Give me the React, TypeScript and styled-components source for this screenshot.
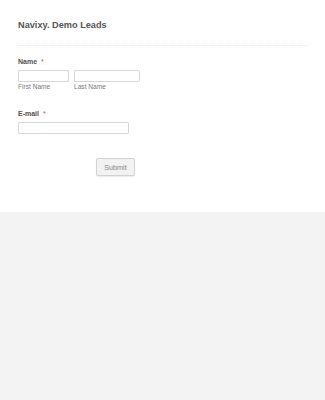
import styled, { createGlobalStyle } from 'styled-components';

const GlobalStyle = createGlobalStyle`
  html, body {
    margin: 0;
    padding: 0;
    background: #f3f3f3;
    font-family: "Liberation Sans", Arial, sans-serif;
  }
`;

const Page = styled.div`
  min-height: 400px;
  background: #f3f3f3;
`;

const FormCard = styled.form`
  background: #ffffff;
  padding: 20px 17px 36px 18px;
  display: flex;
  flex-direction: column;
`;

const Title = styled.h1`
  margin: 0;
  font-size: 9.2px;
  line-height: 11px;
  font-weight: 700;
  color: #555555;
`;

const Divider = styled.hr`
  margin: 14px 0 11px;
  border: 0;
  border-top: 1px dotted #e8e8e8;
  height: 0;
`;

const Field = styled.div<{ $gapTop?: number }>`
  display: flex;
  flex-direction: column;
  margin-top: ${(p) => p.$gapTop ?? 0}px;
`;

const Label = styled.label`
  font-size: 7px;
  line-height: 9px;
  font-weight: 700;
  color: #505050;
  margin-bottom: 4px;
`;

const Required = styled.span`
  color: #f23a3c;
  margin-left: 4px;
  font-weight: 400;
`;

const Row = styled.div`
  display: flex;
  gap: 5px;
`;

const SubField = styled.div`
  display: flex;
  flex-direction: column;
`;

const Input = styled.input<{ $w: number }>`
  box-sizing: border-box;
  width: ${(p) => p.$w}px;
  height: 12px;
  margin: 0;
  padding: 0 3px;
  border: 1px solid #d6d6d6;
  border-radius: 1px;
  background: #fff;
  font-size: 7px;
`;

const SubLabel = styled.span`
  font-size: 6.6px;
  line-height: 8px;
  color: #7a7a7a;
  margin-top: 1px;
`;

const ButtonRow = styled.div`
  display: flex;
  padding-left: 78px;
  margin-top: 24px;
`;

const SubmitButton = styled.button`
  box-sizing: border-box;
  width: 39px;
  height: 18px;
  padding: 0;
  border: 1px solid #d2d2d2;
  border-radius: 2px;
  background: #f2f2f2;
  box-shadow: 0 1px 1px rgba(0, 0, 0, 0.08);
  font-family: "Liberation Sans", Arial, sans-serif;
  font-size: 7.2px;
  color: #858585;
`;

export default function App() {
  return (
    <Page>
      <GlobalStyle />
      <FormCard onSubmit={(e) => e.preventDefault()}>
        <Title>Navixy. Demo Leads</Title>
        <Divider />
        <Field>
          <Label>
            Name<Required>*</Required>
          </Label>
          <Row>
            <SubField>
              <Input $w={51} />
              <SubLabel>First Name</SubLabel>
            </SubField>
            <SubField>
              <Input $w={66} />
              <SubLabel>Last Name</SubLabel>
            </SubField>
          </Row>
        </Field>
        <Field $gapTop={18}>
          <Label>
            E-mail<Required>*</Required>
          </Label>
          <Input $w={111} />
        </Field>
        <ButtonRow>
          <SubmitButton type="submit">Submit</SubmitButton>
        </ButtonRow>
      </FormCard>
    </Page>
  );
}
